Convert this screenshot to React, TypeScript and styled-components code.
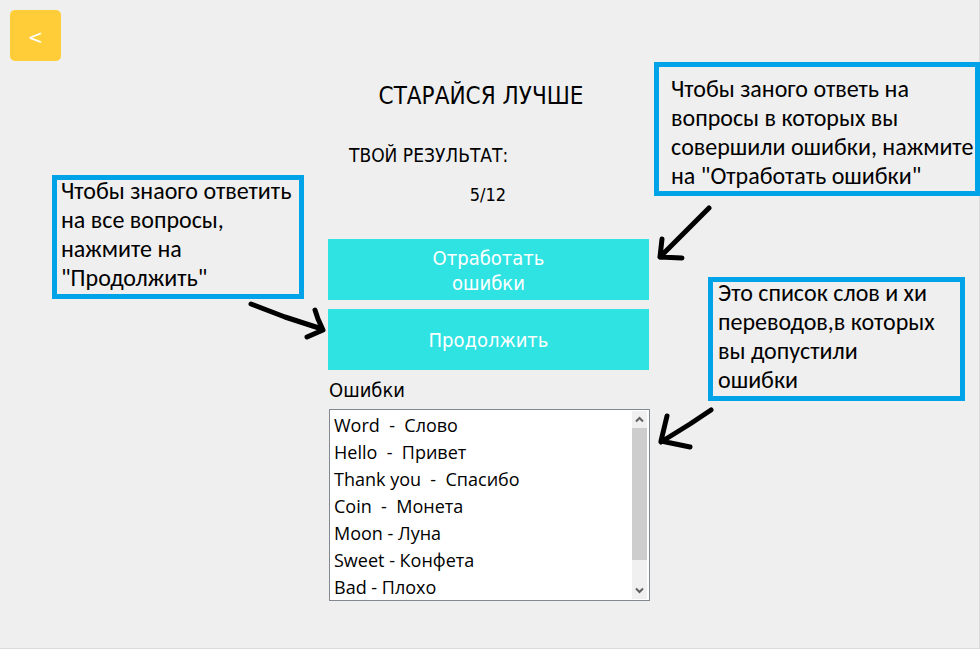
import React, { useRef } from "react";
import styled, { createGlobalStyle } from "styled-components";

const GlobalStyle = createGlobalStyle`
  * { box-sizing: border-box; }
  body { margin: 0; background: #efefef; color: #000; }
  button { border: 0; padding: 0; cursor: pointer; }
`;

const uiFont = `"DejaVu Sans Condensed", "DejaVu Sans", sans-serif`;

const Page = styled.div`
  min-height: 100vh;
  display: grid;
  grid-template-columns: minmax(0, 1fr) 322px minmax(0, 1fr);
  padding-right: 1px;
  background: #efefef;
  border-right: 1px solid #dadada;
  border-bottom: 1px solid #dadada;
  font-family: ${uiFont};
`;

const LeftSide = styled.aside`
  display: flex;
  flex-direction: column;
  padding: 10px 0 0 10px;
`;

const RightSide = styled.aside`
  display: flex;
  flex-direction: column;
  align-items: flex-start;
  padding: 62px 0 0 4px;
`;

const Main = styled.main`
  display: flex;
  flex-direction: column;
  padding-top: 81px;
`;

const BackButton = styled.button`
  width: 51px;
  height: 51px;
  padding-top: 2px;
  border-radius: 5px;
  background: #ffcd38;
  color: #fff;
  font: 20px ${uiFont};
`;

const Callout = styled.p<{ $padding: string; $margin?: string; $width: string }>`
  flex: none;
  width: ${(p) => p.$width};
  margin: ${(p) => p.$margin ?? "0"};
  padding: ${(p) => p.$padding};
  outline: 5px solid #00a2e8;
  outline-offset: -5px;
  font-family: Carlito, "Open Sans", sans-serif;
  font-size: 24px;
  line-height: 29px;
  white-space: nowrap;
`;

const Arrow = styled.svg<{ $end?: boolean }>`
  display: block;
  flex: none;
  align-self: ${(p) => (p.$end ? "flex-end" : "flex-start")};
  fill: none;
  stroke: #000;
  stroke-width: 5;
  stroke-linecap: round;
  stroke-linejoin: round;
`;

const Title = styled.h1`
  margin: 0;
  padding-right: 16px;
  font-size: 24px;
  font-weight: 400;
  line-height: 30px;
  text-align: center;
`;

const ResultLabel = styled.p`
  margin: 32px 0 0 21px;
  font-size: 19px;
  line-height: 24px;
`;

const Score = styled.p`
  margin: 16px 0 0;
  padding-right: 2px;
  font-size: 18px;
  line-height: 24px;
  text-align: center;
`;

const Actions = styled.div`
  display: flex;
  flex-direction: column;
  gap: 9px;
  margin: 32px 1px 0 0;
`;

const ActionButton = styled.button`
  height: 61px;
  padding-top: 2px;
  background: #2fe3e3;
  color: #fff;
  font: 20px/25px ${uiFont};
`;

const ListTitle = styled.h2`
  margin: 8px 0 0 1px;
  font-size: 20px;
  font-weight: 400;
  line-height: 24px;
`;

const ListFrame = styled.div`
  display: flex;
  height: 192px;
  margin: 7px 0 0 1px;
  padding: 1px 2px 1px 1px;
  border: 1px solid #828790;
  background: #fff;
`;

const Words = styled.ul`
  flex: 1;
  margin: 0;
  padding: 1px 0 0 3px;
  overflow-y: auto;
  scrollbar-width: none;
  list-style: none;
  font-family: "Open Sans", "Noto Sans", sans-serif;
  font-size: 18px;
  line-height: 27px;
  white-space: pre;
`;

const ScrollBar = styled.div`
  display: flex;
  flex-direction: column;
  width: 15px;
  background: #f0f0f0;
`;

const ScrollButton = styled.button`
  display: grid;
  place-items: center;
  height: 17px;
  background: transparent;
`;

const ScrollTrack = styled.div`
  flex: 1;
`;

const ScrollThumb = styled.div`
  height: 86%;
  background: #cdcdcd;
`;

const words = [
  "Word  -  Слово",
  "Hello  -  Привет",
  "Thank you  -  Спасибо",
  "Coin  -  Монета",
  "Moon - Луна",
  "Sweet - Конфета",
  "Bad - Плохо",
];

function Chevron({ up }: { up?: boolean }) {
  return (
    <svg width="9" height="7" viewBox="0 0 9 7" fill="none" stroke="#606060" strokeWidth="2" aria-hidden="true">
      <path d={up ? "M1 5.5 4.5 2 8 5.5" : "M1 1.5 4.5 5 8 1.5"} />
    </svg>
  );
}

function WordList() {
  const list = useRef<HTMLUListElement>(null);
  const scroll = (top: number) => list.current?.scrollBy({ top });
  return (
    <ListFrame>
      <Words ref={list} aria-labelledby="mistakes">
        {words.map((word) => (
          <li key={word}>{word}</li>
        ))}
      </Words>
      <ScrollBar>
        <ScrollButton type="button" aria-label="Вверх" onClick={() => scroll(-27)}>
          <Chevron up />
        </ScrollButton>
        <ScrollTrack>
          <ScrollThumb />
        </ScrollTrack>
        <ScrollButton type="button" aria-label="Вниз" onClick={() => scroll(27)}>
          <Chevron />
        </ScrollButton>
      </ScrollBar>
    </ListFrame>
  );
}

export default function App() {
  return (
    <>
      <GlobalStyle />
      <Page>
        <LeftSide>
          <BackButton type="button" aria-label="Назад">&lt;</BackButton>
          <Callout $width="252px" $margin="114px 0 0 42px" $padding="1px 9px 7px">
            Чтобы знаого ответить
            <br />
            на все вопросы,
            <br />
            нажмите на
            <br />
            "Продолжить"
          </Callout>
          <Arrow $end width="80" height="42" viewBox="248 299 80 42" aria-hidden="true">
            <path d="M251 304 285 317 322 329M315 310 318 319 323 330 307 337" />
          </Arrow>
        </LeftSide>

        <Main>
          <Title>СТАРАЙСЯ ЛУЧШЕ</Title>
          <ResultLabel>ТВОЙ РЕЗУЛЬТАТ:</ResultLabel>
          <Score>5/12</Score>
          <Actions>
            <ActionButton type="button">
              Отработать
              <br />
              ошибки
            </ActionButton>
            <ActionButton type="button">Продолжить</ActionButton>
          </Actions>
          <ListTitle id="mistakes">Ошибки</ListTitle>
          <WordList />
        </Main>

        <RightSide>
          <Callout $width="calc(100% + 2px)" $padding="12px 5px 6px 17px">
            Чтобы заного ответь на
            <br />
            вопросы в которых вы
            <br />
            совершили ошибки, нажмите
            <br />
            на "Отработать ошибки"
          </Callout>
          <Arrow width="62" height="81" viewBox="654 196 62 81" aria-hidden="true">
            <path d="M709 208 684 233 660 257M662 239 660 257 682 258" />
          </Arrow>
          <Callout $width="257px" $margin="0 0 0 54px" $padding="1px 10px 7px">
            Это список слов и хи
            <br />
            переводов,в которых
            <br />
            вы допустили
            <br />
            ошибки
          </Callout>
          <Arrow width="62" height="52" viewBox="654 401 62 52" aria-hidden="true">
            <path d="M711 410 690 424 661 442M667 416 661 441 690 447" />
          </Arrow>
        </RightSide>
      </Page>
    </>
  );
}
